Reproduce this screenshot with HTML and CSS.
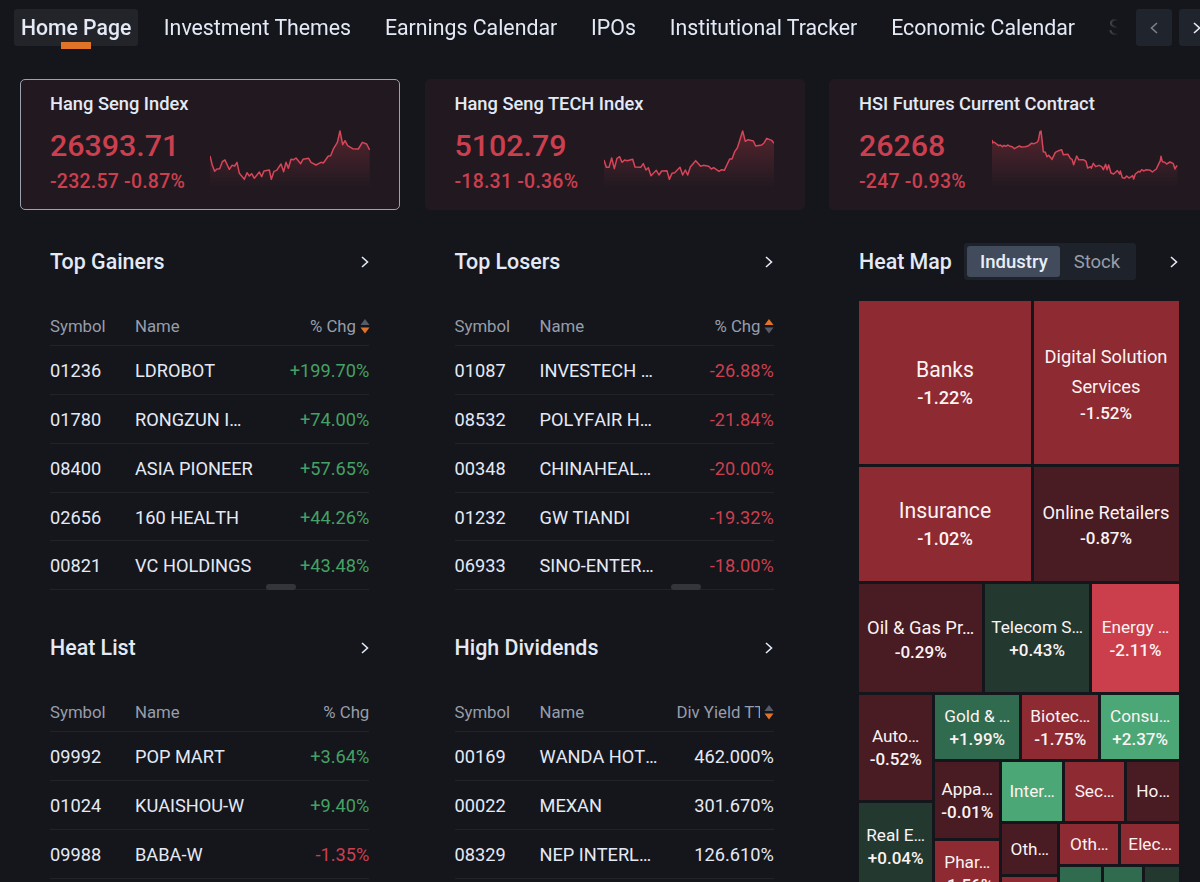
FILE: index.html
```html
<!DOCTYPE html>
<html lang="en">
<head>
  <meta charset="UTF-8">
  <meta name="viewport" content="width=device-width, initial-scale=1.0">
  <title>Markets</title>
  <link rel="stylesheet" href="styles.css">
</head>
<body>

  <nav class="topnav">
    <div class="tabs">
      <a class="tab active">Home Page</a>
      <a class="tab">Investment Themes</a>
      <a class="tab">Earnings Calendar</a>
      <a class="tab">IPOs</a>
      <a class="tab">Institutional Tracker</a>
      <a class="tab">Economic Calendar</a>
      <a class="tab">S</a>
    </div>
    <div class="nav-buttons">
      <button class="nav-btn dim"><svg width="8" height="12" viewBox="0 0 8 12"><path d="M7 1L1.5 6L7 11"/></svg></button>
      <button class="nav-btn"><svg width="8" height="12" viewBox="0 0 8 12"><path d="M1 1L6.5 6L1 11"/></svg></button>
    </div>
  </nav>

  <svg width="0" height="0" class="defs">
    <linearGradient id="fade" x1="0" y1="0" x2="0" y2="1">
      <stop offset="0" stop-color="#cb3f4f" stop-opacity="0.3"/>
      <stop offset="1" stop-color="#cb3f4f" stop-opacity="0"/>
    </linearGradient>
  </svg>

  <section class="cards">
    <div class="card selected">
      <div class="card-title">Hang Seng Index</div>
      <div class="card-body">
        <div>
          <div class="price">26393.71</div>
          <div class="change">-232.57 -0.87%</div>
        </div>
        <svg class="spark" width="160" height="57" viewBox="30 30 480 171">
          <path class="area" d="M30 108L37 136L44 154L51 147L59 146L67 125L75 120L88 148L96 136L104 138L111 127L118 160L133 178L141 158L148 168L155 161L163 175L178 156L185 170L192 153L208 150L214 178L222 154L230 151L243 132L251 155L258 127L265 145L273 118L281 119L288 114L302 131L309 118L326 115L333 127L348 135L363 127L370 129L385 108L392 107L401 85L412 67L420 33L428 74L435 62L443 77L458 86L475 87L487 67L500 72L509 90V200H30Z"/>
          <path class="line" d="M30 108L37 136L44 154L51 147L59 146L67 125L75 120L88 148L96 136L104 138L111 127L118 160L133 178L141 158L148 168L155 161L163 175L178 156L185 170L192 153L208 150L214 178L222 154L230 151L243 132L251 155L258 127L265 145L273 118L281 119L288 114L302 131L309 118L326 115L333 127L348 135L363 127L370 129L385 108L392 107L401 85L412 67L420 33L428 74L435 62L443 77L458 86L475 87L487 67L500 72L509 90"/>
        </svg>
      </div>
    </div>
    <div class="card">
      <div class="card-title">Hang Seng TECH Index</div>
      <div class="card-body">
        <div>
          <div class="price">5102.79</div>
          <div class="change">-18.31 -0.36%</div>
        </div>
        <svg class="spark" width="170" height="57" viewBox="27 30 510 171">
          <path class="area" d="M27 120L34 142L42 142L50 114L58 146L66 115L74 110L81 127L89 120L97 122L113 118L120 141L137 142L145 131L153 150L160 143L168 167L184 151L192 165L200 153L216 152L223 178L231 160L239 158L255 142L263 165L271 150L278 165L286 141L302 122L317 139L325 136L341 139L349 147L356 143L372 154L380 149L388 151L404 117L411 117L419 95L427 84L443 33L451 64L459 59L475 63L482 78L500 75L507 69L515 55L530 61L537 70V200H27Z"/>
          <path class="line" d="M27 120L34 142L42 142L50 114L58 146L66 115L74 110L81 127L89 120L97 122L113 118L120 141L137 142L145 131L153 150L160 143L168 167L184 151L192 165L200 153L216 152L223 178L231 160L239 158L255 142L263 165L271 150L278 165L286 141L302 122L317 139L325 136L341 139L349 147L356 143L372 154L380 149L388 151L404 117L411 117L419 95L427 84L443 33L451 64L459 59L475 63L482 78L500 75L507 69L515 55L530 61L537 70"/>
        </svg>
      </div>
    </div>
    <div class="card">
      <div class="card-title">HSI Futures Current Contract</div>
      <div class="card-body">
        <div>
          <div class="price">26268</div>
          <div class="change">-247 -0.93%</div>
        </div>
        <svg class="spark" width="186" height="57" viewBox="36 30 558 171">
          <path class="area" d="M36 60L38 69L42 66L56 77L61 75L67 80L72 76L77 79L84 75L90 79L97 80L103 86L110 82L118 78L124 81L136 80L146 77L154 70L162 71L171 67L175 61L180 35L183 33L186 59L190 95L196 97L201 110L206 106L216 118L226 97L236 92L245 89L250 104L264 103L271 115L276 118L281 134L290 108L296 119L310 119L318 124L323 144L332 140L334 145L340 130L347 140L357 136L365 140L370 149L377 133L381 149L386 135L393 159L401 162L412 152L419 162L421 153L427 173L434 175L440 168L447 174L454 170L458 167L461 177L466 162L476 154L480 156L485 149L492 153L498 149L511 151L517 156L529 147L535 134L541 122L543 109L547 125L553 126L560 132L570 126L580 131L585 147L589 139L592 137V200H36Z"/>
          <path class="line" d="M36 60L38 69L42 66L56 77L61 75L67 80L72 76L77 79L84 75L90 79L97 80L103 86L110 82L118 78L124 81L136 80L146 77L154 70L162 71L171 67L175 61L180 35L183 33L186 59L190 95L196 97L201 110L206 106L216 118L226 97L236 92L245 89L250 104L264 103L271 115L276 118L281 134L290 108L296 119L310 119L318 124L323 144L332 140L334 145L340 130L347 140L357 136L365 140L370 149L377 133L381 149L386 135L393 159L401 162L412 152L419 162L421 153L427 173L434 175L440 168L447 174L454 170L458 167L461 177L466 162L476 154L480 156L485 149L492 153L498 149L511 151L517 156L529 147L535 134L541 122L543 109L547 125L553 126L560 132L570 126L580 131L585 147L589 139L592 137"/>
        </svg>
      </div>
    </div>
  </section>

  <main class="content">
    <div class="column">
      <section class="panel">
        <div class="panel-head">
          <h2>Top Gainers</h2>
          <svg class="arrow" width="8" height="12" viewBox="0 0 8 12"><path d="M1 1L6.5 6L1 11"/></svg>
        </div>
        <table>
          <thead>
            <tr><th class="symbol">Symbol</th><th class="name">Name</th><th class="num"><div class="sort"><span>% Chg</span><svg width="10" height="15" viewBox="0 0 10 15"><path d="M5 0L9.5 6H0.5Z" fill="#555b69"/><path d="M5 14.5L9.5 8.5H0.5Z" fill="#e07328"/></svg></div></th></tr>
          </thead>
          <tbody>
            <tr><td>01236</td><td>LDROBOT</td><td class="num up">+199.70%</td></tr>
            <tr><td>01780</td><td>RONGZUN I…</td><td class="num up">+74.00%</td></tr>
            <tr><td>08400</td><td>ASIA PIONEER</td><td class="num up">+57.65%</td></tr>
            <tr><td>02656</td><td>160 HEALTH</td><td class="num up">+44.26%</td></tr>
            <tr><td>00821</td><td>VC HOLDINGS</td><td class="num up">+43.48%</td></tr>
          </tbody>
        </table>
        <span class="thumb"></span>
      </section>
      <section class="panel">
        <div class="panel-head">
          <h2>Heat List</h2>
          <svg class="arrow" width="8" height="12" viewBox="0 0 8 12"><path d="M1 1L6.5 6L1 11"/></svg>
        </div>
        <table>
          <thead>
            <tr><th class="symbol">Symbol</th><th class="name">Name</th><th class="num">% Chg</th></tr>
          </thead>
          <tbody>
            <tr><td>09992</td><td>POP MART</td><td class="num up">+3.64%</td></tr>
            <tr><td>01024</td><td>KUAISHOU-W</td><td class="num up">+9.40%</td></tr>
            <tr><td>09988</td><td>BABA-W</td><td class="num down">-1.35%</td></tr>
          </tbody>
        </table>
      </section>
    </div>

    <div class="column">
      <section class="panel">
        <div class="panel-head">
          <h2>Top Losers</h2>
          <svg class="arrow" width="8" height="12" viewBox="0 0 8 12"><path d="M1 1L6.5 6L1 11"/></svg>
        </div>
        <table>
          <thead>
            <tr><th class="symbol">Symbol</th><th class="name">Name</th><th class="num"><div class="sort"><span>% Chg</span><svg width="10" height="15" viewBox="0 0 10 15"><path d="M5 0L9.5 6H0.5Z" fill="#e07328"/><path d="M5 14.5L9.5 8.5H0.5Z" fill="#555b69"/></svg></div></th></tr>
          </thead>
          <tbody>
            <tr><td>01087</td><td>INVESTECH …</td><td class="num down">-26.88%</td></tr>
            <tr><td>08532</td><td>POLYFAIR H…</td><td class="num down">-21.84%</td></tr>
            <tr><td>00348</td><td>CHINAHEAL…</td><td class="num down">-20.00%</td></tr>
            <tr><td>01232</td><td>GW TIANDI</td><td class="num down">-19.32%</td></tr>
            <tr><td>06933</td><td>SINO-ENTER…</td><td class="num down">-18.00%</td></tr>
          </tbody>
        </table>
        <span class="thumb"></span>
      </section>
      <section class="panel">
        <div class="panel-head">
          <h2>High Dividends</h2>
          <svg class="arrow" width="8" height="12" viewBox="0 0 8 12"><path d="M1 1L6.5 6L1 11"/></svg>
        </div>
        <table>
          <thead>
            <tr><th class="symbol">Symbol</th><th class="name">Name</th><th class="num"><div class="sort"><span class="clip">Div Yield TTM</span><svg width="10" height="15" viewBox="0 0 10 15"><path d="M5 0L9.5 6H0.5Z" fill="#555b69"/><path d="M5 14.5L9.5 8.5H0.5Z" fill="#e07328"/></svg></div></th></tr>
          </thead>
          <tbody>
            <tr><td>00169</td><td>WANDA HOT…</td><td class="num">462.000%</td></tr>
            <tr><td>00022</td><td>MEXAN</td><td class="num">301.670%</td></tr>
            <tr><td>08329</td><td>NEP INTERL…</td><td class="num">126.610%</td></tr>
          </tbody>
        </table>
      </section>
    </div>

    <div class="column">
      <section class="panel">
        <div class="panel-head">
          <h2>Heat Map</h2>
          <div class="switch">
            <button class="on">Industry</button>
            <button>Stock</button>
          </div>
          <svg class="arrow" width="8" height="12" viewBox="0 0 8 12"><path d="M1 1L6.5 6L1 11"/></svg>
        </div>
        <div class="heatmap">
          <div class="row h163">
            <div class="cell red w172 xl"><span>Banks</span><b>-1.22%</b></div>
            <div class="cell red lg two"><span>Digital Solution Services</span><b>-1.52%</b></div>
          </div>
          <div class="row h114">
            <div class="cell red w172 xl"><span>Insurance</span><b>-1.02%</b></div>
            <div class="cell dark-red lg"><span>Online Retailers</span><b>-0.87%</b></div>
          </div>
          <div class="row h108">
            <div class="cell dark-red w123 md"><span>Oil &amp; Gas Pr…</span><b>-0.29%</b></div>
            <div class="cell dark-green w104"><span>Telecom S…</span><b>+0.43%</b></div>
            <div class="cell bright-red"><span>Energy …</span><b>-2.11%</b></div>
          </div>
          <div class="row fill">
            <div class="stack w73">
              <div class="cell dark-red h105"><span>Auto…</span><b>-0.52%</b></div>
              <div class="cell dark-green h87"><span>Real E…</span><b>+0.04%</b></div>
            </div>
            <div class="stack">
              <div class="row h64">
                <div class="cell green w84"><span>Gold &amp; …</span><b>+1.99%</b></div>
                <div class="cell red w76"><span>Biotec…</span><b>-1.75%</b></div>
                <div class="cell bright-green"><span>Consu…</span><b>+2.37%</b></div>
              </div>
              <div class="row fill">
                <div class="stack w64">
                  <div class="cell dark-red h76"><span>Appa…</span><b>-0.01%</b></div>
                  <div class="cell red h65"><span>Phar…</span><b>-1.56%</b></div>
                </div>
                <div class="stack">
                  <div class="row h59">
                    <div class="cell bright-green w60"><span>Inter…</span></div>
                    <div class="cell red w60"><span>Sec…</span></div>
                    <div class="cell dark-red"><span>Ho…</span></div>
                  </div>
                  <div class="row fill">
                    <div class="stack w55">
                      <div class="cell dark-red h50"><span>Oth…</span></div>
                      <div class="cell red h50"></div>
                    </div>
                    <div class="stack">
                      <div class="row h40">
                        <div class="cell red w58"><span>Oth…</span></div>
                        <div class="cell red"><span>Elec…</span></div>
                      </div>
                      <div class="row h40">
                        <div class="cell green w41"></div>
                        <div class="cell green w38"></div>
                        <div class="cell dark-green"></div>
                      </div>
                    </div>
                  </div>
                </div>
              </div>
            </div>
          </div>
        </div>
      </section>
    </div>
  </main>

</body>
</html>
```

FILE: styles.css
```css
* {
  box-sizing: border-box;
}

body {
  margin: 0;
  width: 1200px;
  height: 882px;
  overflow: hidden;
  background-color: #14161b;
  color: #e4e9f6;
  font-family: Roboto, sans-serif;
}

button {
  border: none;
  padding: 0;
  font-family: inherit;
  cursor: pointer;
}

svg path {
  fill: none;
  stroke-width: 1.6;
}

.defs {
  display: block;
}

/* top navigation */
.topnav {
  display: flex;
  height: 79px;
  padding: 9px 0 0 14px;
}

.tabs {
  display: flex;
  flex: none;
  width: 1108px;
  height: 40px;
  gap: 19.8px;
  overflow: hidden;
  white-space: nowrap;
  -webkit-mask-image: linear-gradient(to right, #000 1070px, transparent 1104px);
  mask-image: linear-gradient(to right, #000 1070px, transparent 1104px);
}

.tab {
  flex: none;
  height: 37px;
  padding: 0 7px;
  font-size: 21.3px;
  line-height: 37px;
}

.tab.active {
  position: relative;
  margin-right: -1.3px;
  background-color: #222429;
  border-radius: 3px;
  font-size: 21.2px;
  font-weight: 500;
}

.tab.active::after {
  content: "";
  position: absolute;
  left: 47px;
  bottom: -3px;
  width: 30px;
  height: 7px;
  background-color: #e07328;
}

.nav-buttons {
  display: flex;
  flex: none;
  gap: 7px;
  margin-left: 14px;
}

.nav-btn {
  display: flex;
  align-items: center;
  justify-content: center;
  width: 36px;
  height: 37px;
  border-radius: 3px;
  background-color: #20242c;
}

.nav-btn path,
.arrow path {
  stroke: #e4e9f6;
}

.nav-btn.dim path {
  stroke: #7d818b;
}

/* index cards */
.cards {
  display: grid;
  grid-template-columns: 380px 380px 380px;
  gap: 24.5px;
  padding-left: 20px;
}

.card {
  height: 131px;
  padding: 13px 31px 0 30px;
  border-radius: 5px;
  background-color: #221920;
}

.card.selected {
  padding: 12px 29px 0;
  border: 1px solid #9da1ae;
}

.card-title {
  font-size: 18.3px;
  font-weight: 500;
  line-height: 24px;
}

.card-body {
  display: flex;
  justify-content: space-between;
  color: #cb3f4f;
  font-weight: 500;
}

.price {
  margin-top: 12px;
  font-size: 30.4px;
  line-height: 36px;
}

.change {
  margin-top: 6px;
  font-size: 19.5px;
  line-height: 24px;
  letter-spacing: 0.22px;
}

.spark {
  margin-top: 14px;
}

.spark .area {
  fill: url(#fade);
}

.spark .line {
  stroke: #d64558;
  stroke-width: 4.5;
  stroke-linejoin: round;
}

/* panels */
.content {
  display: grid;
  grid-template-columns: 380px 380px 380px;
  gap: 24.5px;
  padding: 33px 0 0 20px;
}

.panel {
  position: relative;
  height: 386px;
  padding: 0 30px;
}

.panel-head {
  display: flex;
  align-items: center;
  height: 37px;
}

.panel-head h2 {
  margin: 0;
  font-size: 21.4px;
  font-weight: 500;
}

.arrow {
  margin-left: auto;
  margin-right: 1.5px;
}

table {
  width: 319.3px;
  margin-top: 26px;
  border-collapse: separate;
  border-spacing: 0;
  table-layout: fixed;
}

th,
td {
  height: 48.7px;
  padding: 1.5px 0 0;
  border-bottom: 1.5px solid #212328;
  font-size: 18.2px;
  font-weight: 400;
  font-kerning: none;
  text-align: left;
  white-space: nowrap;
}

th {
  height: 39.7px;
  color: #979daa;
  font-size: 16.8px;
}

tbody tr:first-child td {
  height: 49.6px;
  padding-top: 2px;
}

.symbol {
  width: 85px;
}

.name {
  width: 125px;
}

.num {
  text-align: right;
}

.up {
  color: #45a164;
}

.down {
  color: #cb3f4f;
}

.sort {
  display: flex;
  align-items: center;
  justify-content: flex-end;
  gap: 4px;
  margin-right: -0.7px;
}

.sort path {
  fill: revert-layer;
}

.clip {
  width: 84px;
  flex: none;
  overflow: hidden;
  font-kerning: normal;
}

.thumb {
  position: absolute;
  left: 246px;
  top: 341px;
  width: 30px;
  height: 6px;
  border-radius: 3px;
  background-color: #33353a;
}

.switch {
  display: flex;
  width: 172px;
  height: 37px;
  margin-left: 12.5px;
  padding: 3px;
  border-radius: 3px;
  background-color: #1e232b;
}

.switch button {
  width: 73px;
  background: none;
  color: #979daa;
  font-size: 18.5px;
}

.switch .on {
  width: 93px;
  border-radius: 3px;
  background-color: #414b5b;
  color: #e9eef9;
  font-weight: 500;
}

/* heat map */
.heatmap {
  display: flex;
  flex-direction: column;
  gap: 3px;
  height: 620px;
  margin-top: 21px;
}

.row {
  display: flex;
  flex: none;
  gap: 3px;
}

.row.fill {
  flex: 1;
}

.stack {
  display: flex;
  flex: 1;
  flex-direction: column;
  gap: 3px;
  min-width: 0;
}

.cell {
  display: flex;
  flex: 1;
  flex-direction: column;
  align-items: center;
  justify-content: center;
  min-width: 0;
  color: #fbf3f3;
  font-size: 17.2px;
  line-height: 23px;
  text-align: center;
  white-space: nowrap;
}

.h108 .cell,
.h64 .cell,
.cell.h76 {
  padding-top: 1px;
}

.cell b {
  font-size: 17px;
  font-weight: 500;
}

.cell.xl {
  font-size: 21.2px;
  line-height: 30px;
}

.cell.xl b {
  font-size: 18.2px;
  line-height: 25px;
}

.h114 .cell.xl {
  padding-bottom: 1px;
}

.cell.lg {
  padding: 0 1px 0.5px 0;
  font-size: 18.3px;
  line-height: 29px;
}

.cell.two {
  padding-bottom: 0;
  line-height: 30px;
  white-space: normal;
}

.cell.md {
  font-size: 18.3px;
  line-height: 27px;
}

.cell.lg b,
.cell.md b {
  line-height: 22px;
}

.row > .w172 { flex: 0 0 172px; }
.row > .w123 { flex: 0 0 123.3px; }
.row > .w104 { flex: 0 0 103.7px; }
.row > .w84 { flex: 0 0 84px; }
.row > .w76 { flex: 0 0 76px; }
.row > .w73 { flex: 0 0 73.3px; }
.row > .w64 { flex: 0 0 64px; }
.row > .w60 { flex: 0 0 59.5px; }
.row > .w58 { flex: 0 0 58px; }
.row > .w55 { flex: 0 0 55px; }
.row > .w41 { flex: 0 0 41px; }
.row > .w38 { flex: 0 0 38px; }

.row.h163 { height: 163px; }
.row.h114 { height: 114px; }
.row.h108 { height: 108px; }
.row.h64 { height: 64px; }
.row.h59 { height: 59px; }
.row.h40 { height: 40px; }
.stack > .h105 { flex: 0 0 105px; }
.stack > .h87 { flex: 0 0 87px; }
.stack > .h76 { flex: 0 0 76px; }
.stack > .h65 { flex: 0 0 65px; }
.stack > .h50 { flex: 0 0 50px; }

.red { background-color: #8d2a32; }
.dark-red { background-color: #491b22; }
.bright-red { background-color: #cb3e4b; }
.green { background-color: #306b4f; }
.dark-green { background-color: #23392f; }
.bright-green { background-color: #4ca777; }
```
